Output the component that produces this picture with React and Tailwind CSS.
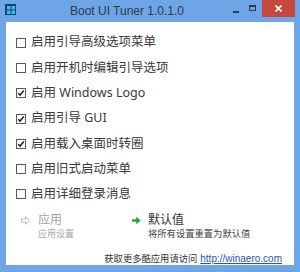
import React, { useState } from 'react';

const FONT = { fontFamily: '"Noto Sans", "Noto Sans CJK SC", sans-serif' };

const OPTIONS = [
    { label: '启用引导高级选项菜单', checked: false },
    { label: '启用开机时编辑引导选项', checked: false },
    { label: '启用 Windows Logo', checked: true },
    { label: '启用引导 GUI', checked: true },
    { label: '启用载入桌面时转圈', checked: true },
    { label: '启用旧式启动菜单', checked: false },
    { label: '启用详细登录消息', checked: false },
];

function CheckBox({ checked }) {
    return (
        <span className="w-[10px] h-[10px] border border-[#5a5a5a] bg-white flex items-center justify-center shrink-0">
            {checked && (
                <svg width="8" height="8" viewBox="0 0 8 8">
                    <path d="M1.2 4.2 L3.1 6.1 L6.8 1.6" fill="none" stroke="#222" strokeWidth="1.5" />
                </svg>
            )}
        </span>
    );
}

export default function App() {
    const [options, setOptions] = useState(OPTIONS);

    const toggle = (i) => setOptions(opts => opts.map((o, j) => j === i ? { ...o, checked: !o.checked } : o));

    return (
        <div className="w-[300px] h-[272px] bg-[#6ea5e7] flex flex-col" style={FONT}>
            {/* Barra de título */}
            <div className="h-[22px] flex items-start relative shrink-0">
                <div className="ml-[5px] mt-[4px] w-[11px] h-[11px] bg-[#1d3e72] flex items-center justify-center">
                    <svg width="8" height="8" viewBox="0 0 8 8">
                        <rect x="0" y="0" width="3.5" height="3.5" fill="#35c0ee" />
                        <rect x="4.5" y="0" width="3.5" height="3.5" fill="#35c0ee" />
                        <rect x="0" y="4.5" width="3.5" height="3.5" fill="#35c0ee" />
                        <rect x="4.5" y="4.5" width="3.5" height="3.5" fill="#35c0ee" />
                    </svg>
                </div>
                <div className="flex-1 text-center text-[12px] leading-[22px] text-[#2d3a4a] pl-[8px]" style={{ fontFamily: '"Liberation Sans", sans-serif' }}>
                    Boot UI Tuner 1.0.1.0
                </div>
                <div className="w-[12px] h-[22px] flex items-center justify-center mr-[4px]">
                    <span className="w-[6px] h-[2px] bg-[#2d3a4a] mt-[1px]" />
                </div>
                <div className="w-[12px] h-[22px] flex items-start justify-center mr-[4px] pt-[5px]">
                    <span className="w-[7px] h-[6px] border border-[#2d3a4a] border-t-2" />
                </div>
                <div className="w-[33px] h-[17px] bg-[#c7463d] flex items-center justify-center mr-[5px]">
                    <svg width="7" height="7" viewBox="0 0 7 7">
                        <path d="M0.5 0.5 L6.5 6.5 M6.5 0.5 L0.5 6.5" stroke="#fff" strokeWidth="1.6" />
                    </svg>
                </div>
            </div>

            {/* Contenido */}
            <div className="flex-1 mx-[6px] mb-[7px] bg-white flex flex-col">
                <div className="pt-[8px] flex flex-col">
                    {options.map((o, i) => (
                        <div key={i} onClick={() => toggle(i)} className="h-[25.3px] flex items-center pl-[10px] gap-[5px] cursor-default">
                            <CheckBox checked={o.checked} />
                            <span className="text-[12.5px] leading-none text-[#3a3a3a]">{o.label}</span>
                        </div>
                    ))}
                </div>

                {/* Botones */}
                <div className="mt-[6px] flex">
                    <div className="flex w-[112px]">
                        <div className="w-[32px] flex justify-end pr-[8px] pt-[3px]">
                            <svg width="9" height="9" viewBox="0 0 9 9">
                                <path d="M0.5 3 H4.5 V0.8 L8.3 4.5 L4.5 8.2 V6 H0.5 Z" fill="none" stroke="#b4b4b4" strokeWidth="1" />
                            </svg>
                        </div>
                        <div className="flex flex-col">
                            <span className="text-[12px] leading-[14px] text-[#a3a3a3]">应用</span>
                            <span className="text-[9px] leading-[14px] text-[#a8a8a8]">应用设置</span>
                        </div>
                    </div>
                    <div className="flex">
                        <div className="w-[30px] flex justify-end pr-[7px] pt-[3px]">
                            <svg width="9" height="9" viewBox="0 0 9 9">
                                <path d="M0 3.2 H4.3 V0.6 L8.6 4.5 L4.3 8.4 V5.8 H0 Z" fill="#35a334" />
                            </svg>
                        </div>
                        <div className="flex flex-col">
                            <span className="text-[12px] leading-[14px] text-[#333]">默认值</span>
                            <span className="text-[9.3px] leading-[14px] text-[#444]">将所有设置重置为默认值</span>
                        </div>
                    </div>
                </div>

                {/* Pie */}
                <div className="mt-auto h-[12px] flex items-center justify-end pr-[12px] gap-[3px] text-[9.3px] leading-[12px]">
                    <span className="text-[#333]">获取更多酷应用请访问</span>
                    <a href="#" className="text-[#1f58b5] underline text-[10px]" style={{ fontFamily: '"Liberation Sans", sans-serif' }}>http://winaero.com</a>
                </div>
            </div>
        </div>
    );
}
